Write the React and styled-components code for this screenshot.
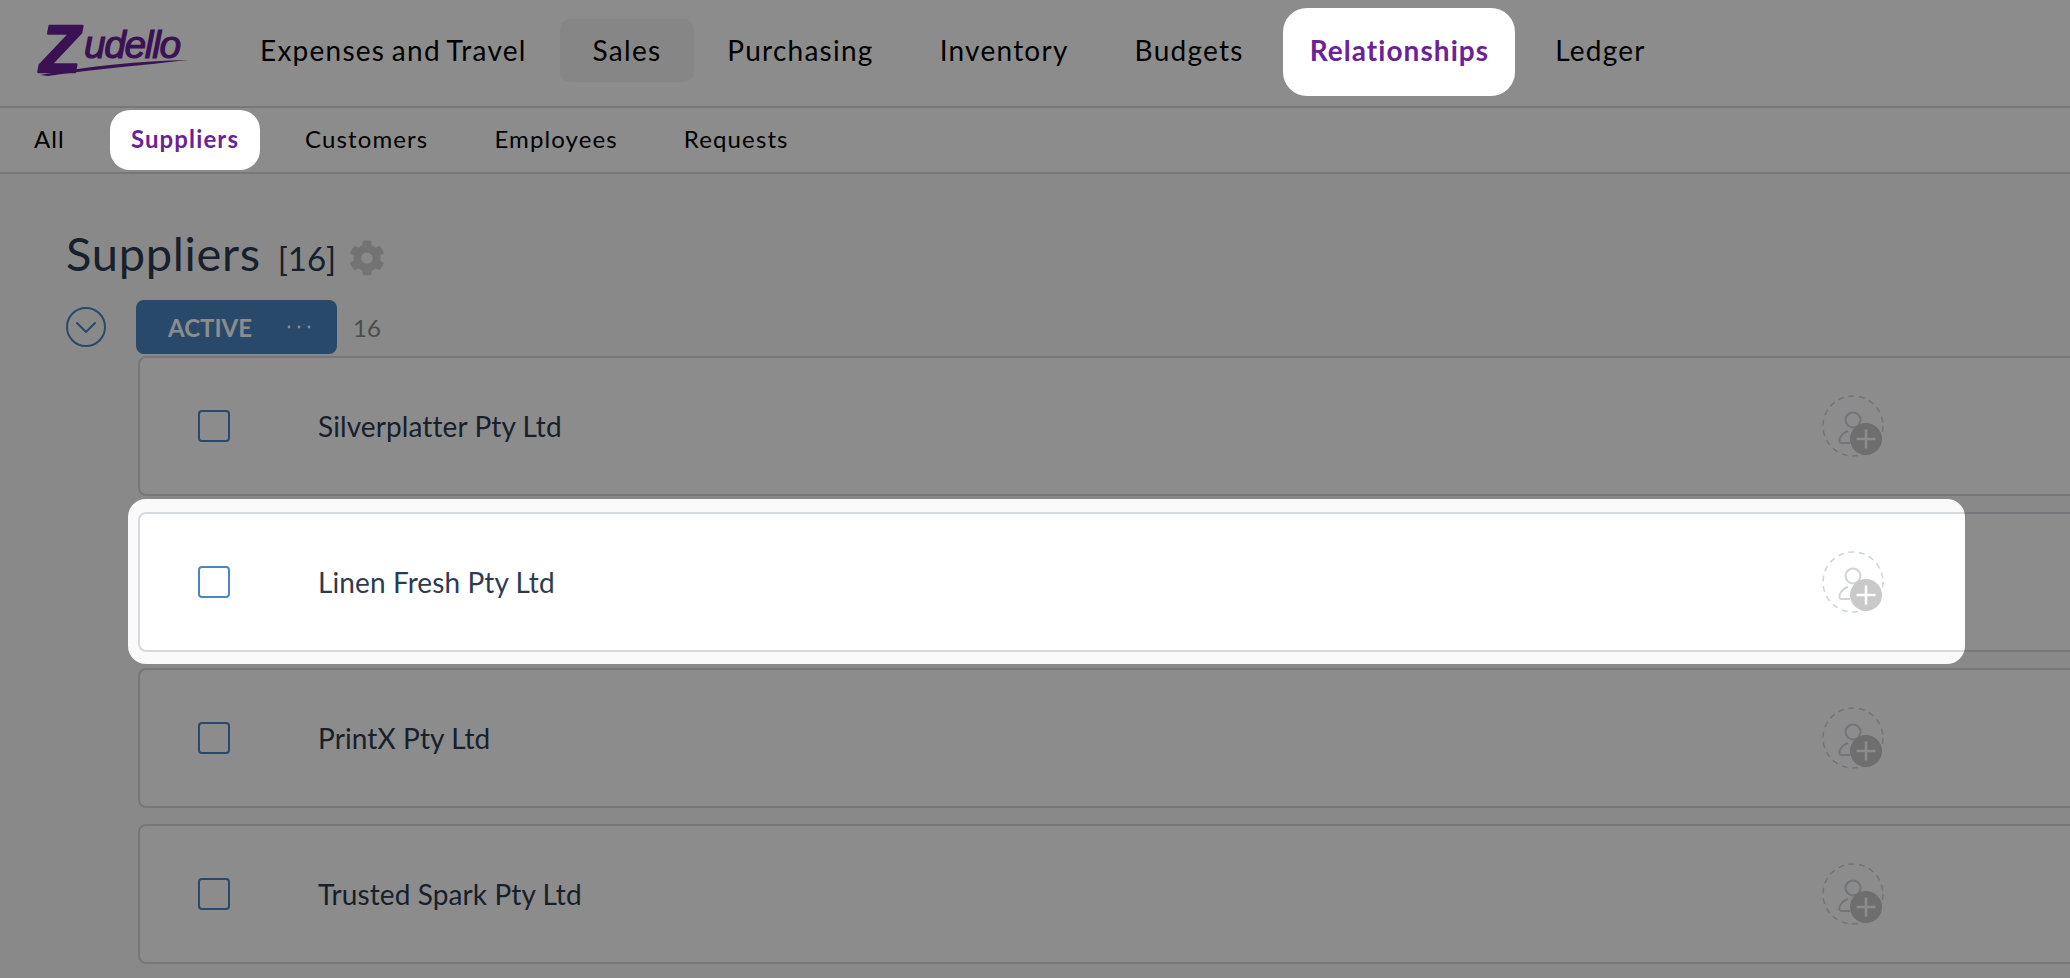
import React from "react";
import styled, { createGlobalStyle } from "styled-components";
import { FaCog } from "react-icons/fa";

const PURPLE = "#6b2299";
const BLUE = "#4a86bf";
const LINE = "#d6d9de";

const GlobalStyle = createGlobalStyle`
  html, body { margin: 0; padding: 0; height: 100%; background: #fafafb; overflow: hidden; }
  body { font-family: Lato, "Open Sans", sans-serif; }
`;

const Page = styled.div`
  height: 978px;
  overflow: hidden;
  display: flex;
  flex-direction: column;
`;

const TopBar = styled.header`
  height: 106px;
  flex: none;
  display: flex;
  align-items: center;
  background: #fff;
  border-bottom: 2px solid ${LINE};
`;

const LogoWrap = styled.div`
  width: 227px;
  flex: none;
  height: 106px;
`;

const MainNav = styled.nav`
  display: flex;
  align-items: center;
  height: 100px;
  margin-bottom: 6px;
`;

const NavItem = styled.div`
  height: 63px;
  display: flex;
  align-items: center;
  padding: 0 33px;
  border-radius: 10px;
  font-size: 28px;
  letter-spacing: ${(p) => (p.$active ? "1.05px" : "1.25px")};
  word-spacing: -1.8px;
  white-space: nowrap;
  color: ${(p) => (p.$active ? PURPLE : "#000")};
  font-weight: ${(p) => (p.$active ? 700 : 400)};
  background: ${(p) => (p.$hover ? "#f5f5f5" : "transparent")};
`;

const SubBar = styled.nav`
  height: 66px;
  flex: none;
  display: flex;
  align-items: center;
  padding: 0 0 4px 1px;
  box-sizing: border-box;
  background: #fff;
  border-bottom: 2px solid ${LINE};
`;

const SubItem = styled.div`
  padding: 0 33px;
  font-size: 24px;
  letter-spacing: 1.12px;
  white-space: nowrap;
  color: ${(p) => (p.$active ? PURPLE : "#000")};
  font-weight: ${(p) => (p.$active ? 700 : 400)};
`;

const Main = styled.main`
  flex: 1;
  padding: 51px 0 0 66px;
  overflow: hidden;
`;

const Heading = styled.div`
  display: flex;
  align-items: center;
  height: 56px;
  color: #2d3b4f;
`;

const Title = styled.h1`
  margin: 0;
  font-size: 47px;
  font-weight: 400;
  letter-spacing: 0.7px;
`;

const Count = styled.span`
  font-size: 33px;
  margin: 10px 0 0 17px;
`;

const Gear = styled(FaCog)`
  width: 36px;
  height: 36px;
  margin: 9px 0 0 13px;
  color: #d2d2d2;
`;

const GroupRow = styled.div`
  display: flex;
  align-items: center;
  gap: 30px;
  margin-top: 19px;
`;

const Badge = styled.div`
  width: 201px;
  height: 54px;
  box-sizing: border-box;
  padding-left: 32px;
  display: flex;
  align-items: center;
  gap: 35px;
  border-radius: 8px;
  background: ${BLUE};
  color: #fff;
  font-size: 24px;
  font-weight: 700;
`;

const GroupCount = styled.span`
  margin-left: -14px;
  font-size: 24px;
  color: #8a8a8a;
`;

const Rows = styled.div`
  display: flex;
  flex-direction: column;
  gap: 16px;
  margin: 2px 0 0 72px;
  width: 2000px;
`;

const Row = styled.div`
  height: 140px;
  box-sizing: border-box;
  display: flex;
  align-items: center;
  padding: 0 252px 0 58px;
  border: 2px solid ${LINE};
  border-radius: 8px;
  background: #fff;
`;

const Check = styled.span`
  width: 32px;
  height: 32px;
  flex: none;
  box-sizing: border-box;
  border: 2px solid ${BLUE};
  border-radius: 4px;
  background: #fff;
`;

const Name = styled.span`
  flex: 1;
  margin-left: 88px;
  font-size: 28px;
  letter-spacing: 0.1px;
  color: #2d3b4f;
`;

// dims the whole page, leaving the highlighted parts cut out of it
const Overlay = styled.div`
  position: fixed;
  inset: 0;
  background: rgba(0, 0, 0, 0.45);
`;

const holes = [
  { x: 1283, y: 8, w: 232, h: 88, r: 24 },
  { x: 110, y: 110, w: 150, h: 60, r: 20 },
  { x: 128, y: 499, w: 1837, h: 165, r: 18 },
];

const holePath = ({ x, y, w, h, r }) =>
  `M${x + r} ${y}H${x + w - r}A${r} ${r} 0 0 1 ${x + w} ${y + r}V${y + h - r}A${r} ${r} 0 0 1 ${x + w - r} ${y + h}H${x + r}A${r} ${r} 0 0 1 ${x} ${y + h - r}V${y + r}A${r} ${r} 0 0 1 ${x + r} ${y}Z`;

const overlayClip = `path(evenodd, "M0 0H2070V978H0Z${holes.map(holePath).join("")}")`;

const Logo = () => (
  <svg width="190" height="90" viewBox="0 0 190 90" style={{ display: "block" }}>
    <text x="40" y="72" fontFamily="Liberation Sans, sans-serif" fontStyle="italic" fontWeight="700" fontSize="66" fill={PURPLE} stroke={PURPLE} strokeWidth="2.5" strokeLinejoin="round">Z</text>
    <text x="84" y="58" fontFamily="Liberation Sans, sans-serif" fontStyle="italic" fontSize="39" letterSpacing="-1.4" fill={PURPLE} stroke={PURPLE} strokeWidth="1.1">udello</text>
    <path d="M40 75 C 90 66, 140 61, 188 60 C 145 65, 95 69, 48 76 Z" fill={PURPLE} />
  </svg>
);

const ChevronCircle = () => (
  <svg width="40" height="40" viewBox="0 0 40 40" fill="none" stroke={BLUE} strokeWidth="2" style={{ flex: "none" }}>
    <circle cx="20" cy="20" r="19" />
    <path d="M11 16l9 9 9-9" strokeLinecap="round" strokeLinejoin="round" />
  </svg>
);

const Dots = () => (
  <svg width="24" height="6" viewBox="0 0 24 6" fill="#fff">
    <circle cx="2" cy="3" r="1.4" />
    <circle cx="12" cy="3" r="1.4" />
    <circle cx="22" cy="3" r="1.4" />
  </svg>
);

const AddPerson = () => (
  <svg width="62" height="62" viewBox="0 0 62 62" fill="none" style={{ flex: "none", overflow: "visible" }}>
    <circle cx="31" cy="31" r="30" stroke="#cfd4da" strokeWidth="1.5" strokeDasharray="6 4.5" />
    <circle cx="31" cy="25" r="7.5" stroke="#cfd4da" strokeWidth="2" />
    <path d="M28 48H20Q16 48 18 43Q20 38 26 36" stroke="#cfd4da" strokeWidth="2" />
    <circle cx="44" cy="44" r="16" fill="#c9c9c9" />
    <path d="M44 34.5v19M34.5 44h19" stroke="#fff" strokeWidth="2.6" />
  </svg>
);

const mainNav = ["Expenses and Travel", "Sales", "Purchasing", "Inventory", "Budgets", "Relationships", "Ledger"];
const subNav = ["All", "Suppliers", "Customers", "Employees", "Requests"];
const suppliers = ["Silverplatter Pty Ltd", "Linen Fresh Pty Ltd", "PrintX Pty Ltd", "Trusted Spark Pty Ltd"];

export default function App() {
  return (
    <>
      <GlobalStyle />
      <Page>
        <TopBar>
          <LogoWrap>
            <Logo />
          </LogoWrap>
          <MainNav>
            {mainNav.map((label) => (
              <NavItem key={label} $active={label === "Relationships"} $hover={label === "Sales"}>
                {label}
              </NavItem>
            ))}
          </MainNav>
        </TopBar>
        <SubBar>
          {subNav.map((label) => (
            <SubItem key={label} $active={label === "Suppliers"}>
              {label}
            </SubItem>
          ))}
        </SubBar>
        <Main>
          <Heading>
            <Title>Suppliers</Title>
            <Count>[16]</Count>
            <Gear />
          </Heading>
          <GroupRow>
            <ChevronCircle />
            <Badge>
              ACTIVE
              <Dots />
            </Badge>
            <GroupCount>16</GroupCount>
          </GroupRow>
          <Rows>
            {suppliers.map((name) => (
              <Row key={name}>
                <Check />
                <Name>{name}</Name>
                <AddPerson />
              </Row>
            ))}
          </Rows>
        </Main>
      </Page>
      <Overlay style={{ clipPath: overlayClip }} />
    </>
  );
}
